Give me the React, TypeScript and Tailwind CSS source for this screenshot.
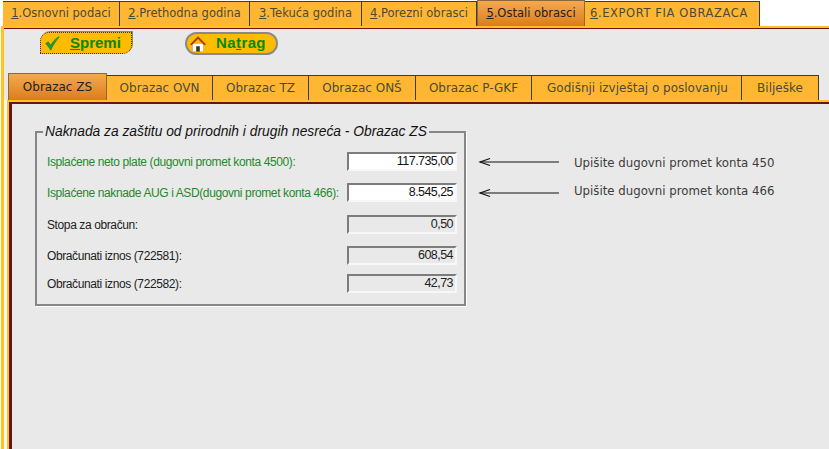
const topTabs = [
  { n: '1', label: '.Osnovni podaci', w: 'w-[117px]' },
  { n: '2', label: '.Prethodna godina', w: 'w-[130px]' },
  { n: '3', label: '.Tekuća godina', w: 'w-[112px]' },
  { n: '4', label: '.Porezni obrasci', w: 'w-[115px]' },
  { n: '5', label: '.Ostali obrasci', w: 'w-[108px]', active: true },
  { n: '6', label: '.EXPORT FIA OBRAZACA', w: 'w-[175px] justify-start pl-[5px] tracking-[0.6px]' },
]

const innerTabs = [
  { label: 'Obrazac ZS', w: 'w-[99px]', active: true },
  { label: 'Obrazac OVN', w: 'w-[106px]' },
  { label: 'Obrazac TZ', w: 'w-[96px]' },
  { label: 'Obrazac ONŠ', w: 'w-[107px]' },
  { label: 'Obrazac P-GKF', w: 'w-[116px]' },
  { label: 'Godišnji izvještaj o poslovanju', w: 'w-[210px] pl-[2px]' },
  { label: 'Bilješke', w: 'w-[77px]' },
]

const rows = [
  { label: 'Isplaćene neto plate (dugovni promet konta 4500):', value: '117.735,00', input: true, mt: 'mt-0' },
  { label: 'Isplaćene naknade AUG i ASD(dugovni promet konta 466):', value: '8.545,25', input: true, mt: 'mt-[12px]' },
  { label: 'Stopa za obračun:', value: '0,50', mt: 'mt-[13px]' },
  { label: 'Obračunati iznos (722581):', value: '608,54', mt: 'mt-[12px]' },
  { label: 'Obračunati iznos (722582):', value: '42,73', mt: 'mt-[9px]' },
]

function Arrow({ className }: { className: string }) {
  return (
    <svg className={className} width="82" height="10" viewBox="0 0 82 10" fill="none" stroke="#111" strokeWidth="1.2">
      <path d="M81 5H2" />
      <path d="M12 1.5L2 5l10 3.5" />
    </svg>
  )
}

export default function App() {
  return (
    <div className="w-[829px] h-[449px] overflow-hidden bg-white flex flex-col font-['DejaVu_Sans',sans-serif]">
      <div className="h-[26px] flex items-end pl-[3px] shrink-0">
        {topTabs.map((t) => (
          <div
            key={t.n}
            className={
              t.active
                ? `${t.w} h-[26px] border border-[#8a6a3a] border-b-0 bg-gradient-to-b from-[#f4a94f] to-[#dc7d14] text-[#222] text-[11.5px] flex items-center justify-center`
                : `${t.w} h-[25px] border-t border-r border-[#3c3c3c] bg-[#ffb733] text-[#4a4a3a] text-[11.5px] flex items-center justify-center`
            }
          >
            <span><span className="underline">{t.n}</span>{t.label}</span>
          </div>
        ))}
      </div>

      <div className="ml-[1px] flex-1 min-h-0 border-l-[3px] border-t-[2px] border-[#ffc21f] flex flex-col">
        <div className="flex-1 min-h-0 border-t border-[#6b1414] bg-[#e9e9e9] pl-[3px] flex flex-col">
          <div className="flex items-start gap-[53px] pl-[33px] pt-[3px] h-[44px] shrink-0">
            <button className="w-[92px] h-[22px] flex items-center pl-[3px] bg-[#ffbb00] border border-dotted border-[#333] rounded-tl-[9px] rounded-br-[9px] shadow-[1px_-1px_0_#888] font-['Liberation_Sans',sans-serif] font-bold text-[15px] text-[#058a05]">
              <svg width="17" height="17" viewBox="0 0 20 18">
                <path d="M2 9l3-2 3 4c2-4 5-7 9-10 1 0 1 .5.5 1C13 7 10 12 8 17 6 14 4 11 2 9z" fill="#18a038" stroke="#0b6b2a" strokeWidth=".6" />
              </svg>
              <span className="ml-[9px]"><span className="underline">S</span>premi</span>
            </button>
            <button className="w-[93px] h-[23px] flex items-center pl-[2px] bg-[#ffbb00] border-2 border-[#8a8a8a] rounded-full font-['Liberation_Sans',sans-serif] font-bold text-[15px] text-[#058a05]">
              <svg width="18" height="18" viewBox="0 0 20 19">
                <path d="M4 9h12v9H4z" fill="#fff" stroke="#999" strokeWidth=".5" />
                <path d="M1 10L10 1l9 9-2 1-7-7-7 7z" fill="#b5321a" />
                <path d="M8 12h4v6H8z" fill="#4a2a1a" />
              </svg>
              <span className="ml-[9px] tracking-[0.4px]">Na<span className="underline">t</span>rag</span>
            </button>
          </div>

          <div className="flex items-end h-[27px] pl-px shrink-0">
            {innerTabs.map((t) => (
              <div
                key={t.label}
                className={
                  t.active
                    ? `${t.w} h-[27px] border border-[#8a6a3a] border-b-0 bg-gradient-to-b from-[#f4a94f] to-[#dc7d14] text-[#222] text-[12px] flex items-center justify-center`
                    : `${t.w} h-[25px] border-t border-r border-[#3c3c3c] bg-[#ffb733] text-[#4a4a3a] text-[12px] flex items-center justify-center`
                }
              >
                {t.label}
              </div>
            ))}
          </div>

          <div className="flex-1 min-h-0 border-l-2 border-t-2 border-[#ffc21f] shadow-[-3px_0_0_#f8f8f8]">
            <div className="h-full border-l-[3px] border-t-2 border-[#6b1414] flex items-start pl-[23px] pt-[21px]">
              <fieldset className="shrink-0 w-[431px] h-[182px] border-2 border-[#868686] shadow-[1px_1px_0_#fff] pl-[10px] pr-[7px] pt-[13px] -mt-[1px]">
                <legend className="-ml-[4px] px-[2px] whitespace-nowrap text-[13.8px] leading-[15px] italic text-[#111] font-['Liberation_Sans',sans-serif]">
                  Naknada za zaštitu od prirodnih i drugih nesreća - Obrazac ZS
                </legend>
                {rows.map((r) => (
                  <div key={r.label} className={`${r.mt} flex items-center justify-between font-['Liberation_Sans',sans-serif] text-[12px]`}>
                    <span className={r.input ? 'text-[#1f8a2a] whitespace-nowrap tracking-[-0.39px]' : 'text-[#222] whitespace-nowrap tracking-[-0.39px]'}>{r.label}</span>
                    <div
                      className={`shrink-0 w-[110px] h-[19px] border-2 border-t-[#7c7c7c] border-l-[#7c7c7c] border-r-[#f7f7f7] border-b-[#f7f7f7] flex items-center justify-end pr-[2px] text-[12.5px] tracking-[-0.55px] ${
                        r.input ? 'bg-white text-[#111]' : 'bg-[#e9e9e9] text-[#222]'
                      }`}
                    >
                      {r.value}
                    </div>
                  </div>
                ))}
              </fieldset>
              <div className="ml-[12px] mt-[30px] flex flex-col gap-[10px] text-[11.75px] text-[#3c3c3c]">
                <div className="flex items-center gap-[14px] h-[18px]">
                  <Arrow className="-translate-y-[2px]" />
                  <span>Upišite dugovni promet konta 450</span>
                </div>
                <div className="flex items-center gap-[14px] h-[18px]">
                  <Arrow className="translate-y-[1px]" />
                  <span>Upišite dugovni promet konta 466</span>
                </div>
              </div>
            </div>
          </div>
        </div>
      </div>
    </div>
  )
}
